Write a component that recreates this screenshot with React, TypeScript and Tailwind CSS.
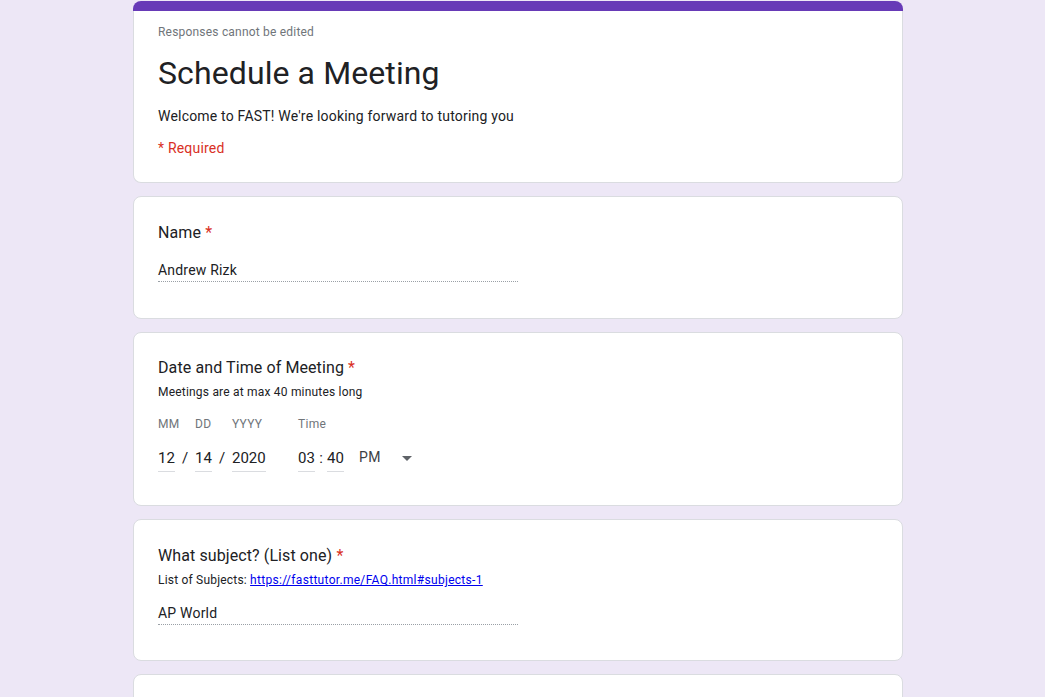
import React from "react";

const font = { fontFamily: "Roboto, 'Liberation Sans', Arial, sans-serif" };

function Card({ children, className = "" }: { children: React.ReactNode; className?: string }) {
  return (
    <div className={`bg-white border border-[#dadce0] rounded-lg px-[24px] ${className}`}>{children}</div>
  );
}

function QTitle({ text }: { text: string }) {
  return (
    <div className="text-[16px] leading-[24px] text-[#202124] tracking-[0.1px]">
      {text} <span className="text-[#d93025]">*</span>
    </div>
  );
}

function DateCol({ label, value, w }: { label: string; value: string; w: string }) {
  return (
    <div className={`flex flex-col ${w}`}>
      <div className="text-[12px] leading-[16px] text-[#70757a] tracking-[0.3px] whitespace-nowrap">{label}</div>
      <div className={`mt-[10px] ${w} pt-[6px] pb-[3px] border-b border-[#dadce0] text-[15px] leading-[20px] text-[#202124] whitespace-nowrap`}>
        {value}
      </div>
    </div>
  );
}

function Sep({ ch, w }: { ch: string; w: string }) {
  return (
    <div className={`flex flex-col ${w} items-center`}>
      <div className="h-[16px]" />
      <div className="mt-[10px] pt-[6px] pb-[4px] text-[15px] leading-[20px] text-[#202124]">{ch}</div>
    </div>
  );
}

export default function App() {
  return (
    <div className="min-h-[697px] w-full bg-[#ede7f6] pl-[133px] pt-[1px]" style={font}>
      <div className="w-[770px] flex flex-col gap-[13px] pb-10">
        {/* Header card */}
        <div>
          <div className="h-[10px] bg-[#673ab7] rounded-t-lg" />
          <div className="bg-white border border-t-0 border-[#dadce0] rounded-b-lg px-[24px] pt-[13px] pb-[24px]">
            <div className="text-[12px] leading-[16px] text-[#70757a] tracking-[0.2px]">Responses cannot be edited</div>
            <div className="mt-[13px] text-[32px] leading-[40px] text-[#202124] tracking-[0.1px]">Schedule a Meeting</div>
            <div className="mt-[13px] text-[14px] leading-[20px] text-[#202124] tracking-[0.2px]">
              Welcome to FAST! We're looking forward to tutoring you
            </div>
            <div className="mt-[12px] text-[14px] leading-[20px] text-[#d93025] tracking-[0.2px]">* Required</div>
          </div>
        </div>

        {/* Name */}
        <Card className="pt-[24px] pb-[36px]">
          <QTitle text="Name" />
          <div className="mt-[15px] w-[360px] pb-[1px] border-b border-dotted border-[#9aa0a6] text-[14px] leading-[20px] text-[#202124] tracking-[0.2px]">
            Andrew Rizk
          </div>
        </Card>

        {/* Date and time */}
        <Card className="pt-[23px] pb-[33px]">
          <QTitle text="Date and Time of Meeting" />
          <div className="mt-[4px] text-[12px] leading-[16px] text-[#202124] tracking-[0.2px]">
            Meetings are at max 40 minutes long
          </div>
          <div className="mt-[16px] flex">
            <DateCol label="MM" value="12" w="w-[17px]" />
            <Sep ch="/" w="w-[20px]" />
            <DateCol label="DD" value="14" w="w-[17px]" />
            <Sep ch="/" w="w-[20px]" />
            <DateCol label="YYYY" value="2020" w="w-[34px]" />
            <div className="w-[32px]" />
            <div className="flex flex-col">
              <div className="text-[12px] leading-[16px] text-[#70757a] tracking-[0.3px]">Time</div>
              <div className="flex items-end">
                <div className="mt-[10px] w-[17px] pt-[6px] pb-[3px] border-b border-[#dadce0] text-[15px] leading-[20px] text-[#202124]">03</div>
                <div className="w-[12px] text-center pb-[4px] text-[15px] leading-[20px] text-[#202124]">:</div>
                <div className="w-[17px] pt-[6px] pb-[3px] border-b border-[#dadce0] text-[15px] leading-[20px] text-[#202124]">40</div>
                <div className="ml-[15px] pb-[5px] text-[14px] leading-[20px] text-[#3c4043] tracking-[0.3px]">PM</div>
                <div className="ml-[21px] pb-[11px]">
                  <svg width="10" height="5" viewBox="0 0 10 5">
                    <path d="M0 0 L10 0 L5 5 Z" fill="#5f6368" />
                  </svg>
                </div>
              </div>
            </div>
          </div>
        </Card>

        {/* Subject */}
        <Card className="pt-[24px] pb-[35px]">
          <QTitle text="What subject? (List one)" />
          <div className="mt-[4px] text-[12px] leading-[16px] text-[#202124] tracking-[0.2px]">
            List of Subjects:{" "}
            <a href="#" className="text-[#0000ee] underline tracking-[0.3px]">
              https://fasttutor.me/FAQ.html#subjects-1
            </a>
          </div>
          <div className="mt-[15px] w-[360px] pb-[1px] border-b border-dotted border-[#9aa0a6] text-[14px] leading-[20px] text-[#202124] tracking-[0.2px]">
            AP World
          </div>
        </Card>

        {/* Next card (cut off) */}
        <Card className="h-[120px]">
          <div />
        </Card>
      </div>
    </div>
  );
}
